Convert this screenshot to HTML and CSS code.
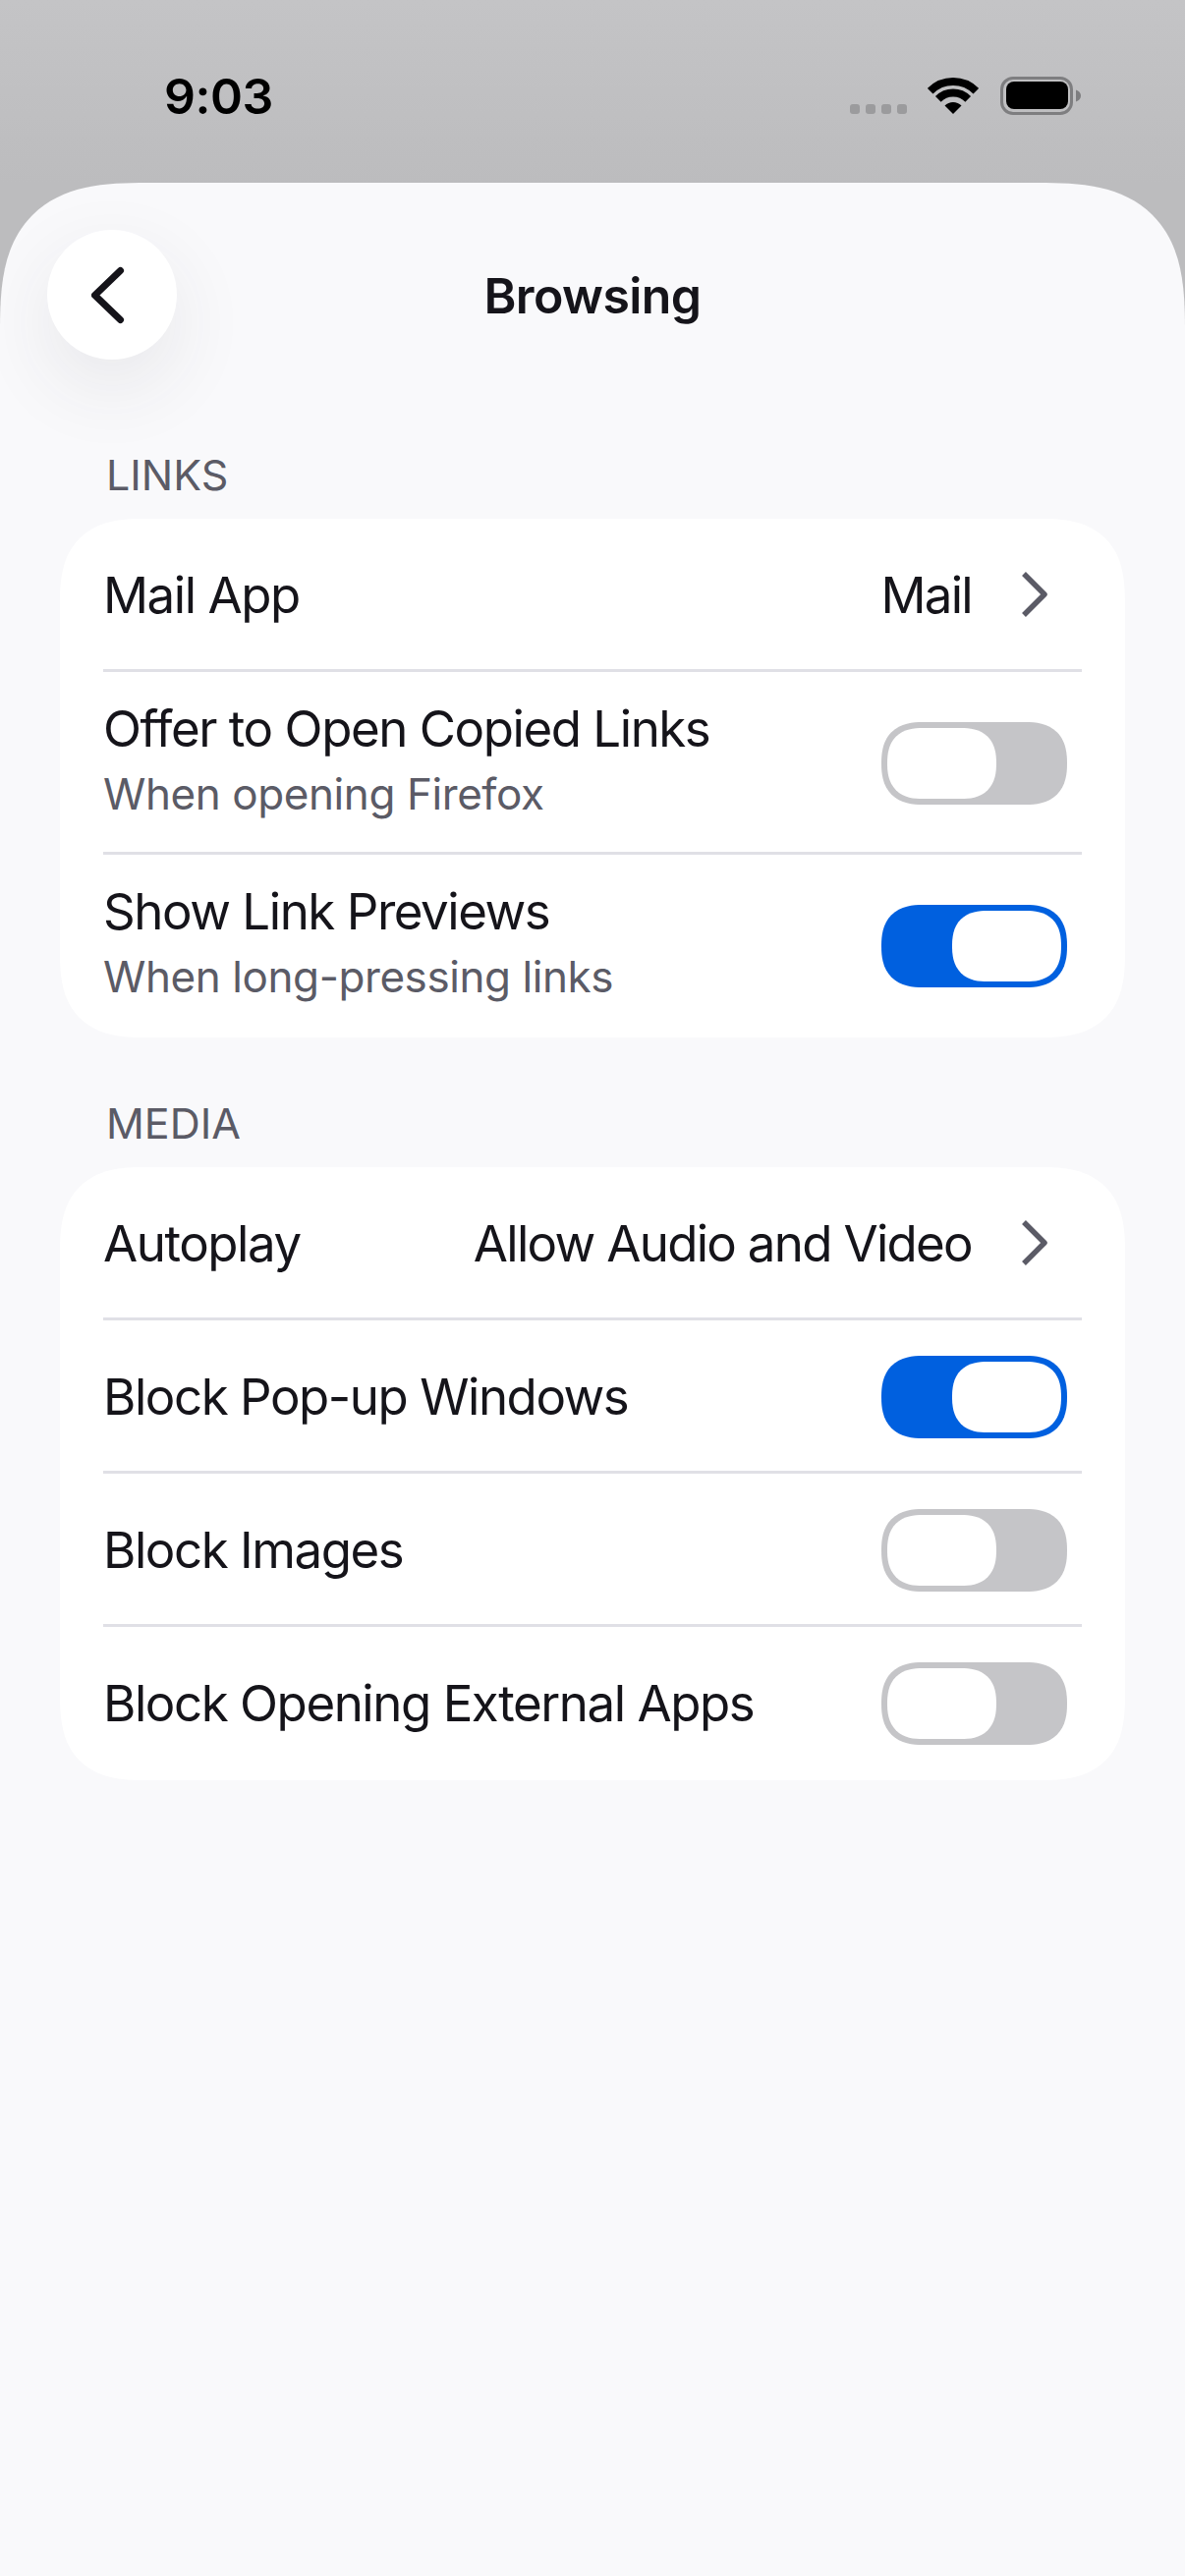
FILE: index.html
```html
<!DOCTYPE html>
<html lang="en">
<head>
<meta charset="utf-8">
<title>Browsing</title>
<link rel="stylesheet" href="styles.css">
</head>
<body>
<div class="phone">
  <header class="status">
    <span class="time">9:03</span>
    <div class="status-icons">
      <div class="dots"><i></i><i></i><i></i><i></i></div>
      <svg class="wifi" width="52" height="37" viewBox="0 0 52 37">
        <path class="wifi-arc" d="M2.67 13.67A33 33 0 0 1 49.33 13.67"/>
        <path class="wifi-arc" d="M10.8 21.8A21.5 21.5 0 0 1 41.2 21.8"/>
        <path class="wifi-fill" d="M26 37L17.5 28.5A12 12 0 0 1 34.5 28.5Z"/>
      </svg>
      <svg class="battery" width="82" height="39" viewBox="0 0 82 39">
        <rect class="batt-shell" x="1.5" y="1.5" width="71" height="36" rx="11.5"/>
        <rect class="batt-fill" x="6" y="5" width="63" height="28" rx="8"/>
        <path class="batt-nub" d="M77 13.5C80 14.5 82 16.5 82 19.5C82 22.5 80 24.5 77 25.5Z"/>
      </svg>
    </div>
  </header>
  <main class="sheet">
    <div class="nav">
      <button class="back" aria-label="Back">
        <svg width="42" height="66" viewBox="0 0 42 66"><path d="M29.500 8.500L3.500 33.500L29.500 58.500"/></svg>
      </button>
      <h1 class="title">Browsing</h1>
    </div>

    <h2 class="section-label section-label-first">LINKS</h2>
    <section class="card">
      <div class="row">
        <span class="label">Mail App</span>
        <span class="value">Mail</span>
        <svg class="chev" width="30" height="48" viewBox="0 0 30 48"><path d="M4 3L25 24L4 45"/></svg>
      </div>
      <div class="row row-tall">
        <div class="stack"><span class="label">Offer to Open Copied Links</span><span class="sub">When opening Firefox</span></div>
        <div class="toggle"><span class="knob"></span></div>
      </div>
      <div class="row row-tall">
        <div class="stack"><span class="label">Show Link Previews</span><span class="sub">When long-pressing links</span></div>
        <div class="toggle on"><span class="knob"></span></div>
      </div>
    </section>

    <h2 class="section-label">MEDIA</h2>
    <section class="card">
      <div class="row">
        <span class="label">Autoplay</span>
        <span class="value">Allow Audio and Video</span>
        <svg class="chev" width="30" height="48" viewBox="0 0 30 48"><path d="M4 3L25 24L4 45"/></svg>
      </div>
      <div class="row">
        <span class="label">Block Pop-up Windows</span>
        <div class="toggle on"><span class="knob"></span></div>
      </div>
      <div class="row">
        <span class="label">Block Images</span>
        <div class="toggle"><span class="knob"></span></div>
      </div>
      <div class="row">
        <span class="label">Block Opening External Apps</span>
        <div class="toggle"><span class="knob"></span></div>
      </div>
    </section>
  </main>
</div>
</body>
</html>
```
FILE: styles.css
```css
* { box-sizing: border-box; }
html, body { margin: 0; padding: 0; }
body { font-family: Inter, "Liberation Sans", sans-serif; color: #15141a; }
.phone { width: 1206px; height: 2622px; overflow: hidden; display: flex; flex-direction: column; background: linear-gradient(#c4c4c6, #bcbcbe 186px); }

.status { height: 186px; flex: none; display: flex; justify-content: space-between; padding: 69px 106px 0 167px; }
.time { font-size: 50px; line-height: 58px; font-weight: 600; color: #000; letter-spacing: -0.5px; }
.status-icons { display: flex; align-items: flex-start; height: 39px; margin-top: 9px; }
.dots { display: flex; gap: 6px; margin-top: 28px; }
.dots i { width: 10px; height: 10px; border-radius: 3px; background: #9b9b9d; }
.wifi { margin: 1px 0 0 21px; }
.wifi-arc { fill: none; stroke: #000; stroke-width: 8; }
.wifi-fill { fill: #000; }
.battery { margin-left: 22px; }
.batt-shell { fill: none; stroke: #7e7e80; stroke-width: 3; }
.batt-fill { fill: #000; }
.batt-nub { fill: #7e7e80; }

.sheet { flex: 1; overflow: hidden; background: #f9f9fb; border-radius: 150px 150px 0 0; corner-shape: superellipse(1.48); padding: 0 61px; }
.nav { height: 271px; position: relative; display: flex; justify-content: center; padding-top: 85px; }
.back { position: absolute; left: -13px; top: 48px; width: 132px; height: 132px; border: 0; padding: 0; border-radius: 50%; background: #fff; box-shadow: 0 28px 80px rgba(58, 57, 68, 0.09); display: flex; align-items: center; justify-content: center; }
.back path { fill: none; stroke: #15141a; stroke-width: 7; stroke-linecap: round; stroke-linejoin: round; }
.title { margin: 0; font-size: 50px; line-height: 60px; font-weight: 600; letter-spacing: -0.6px; }

.section-label { margin: 61px 0 0; padding-left: 47px; height: 53px; font-size: 43px; line-height: 52px; font-weight: 400; color: #5b5b66; }
.section-label-first { margin-top: 0; }
.card { margin: 0; background: #fff; border-radius: 85px; corner-shape: superellipse(1.37); padding: 0 44px; }
.section-label + .card { margin-top: 18px; }
.row { display: flex; align-items: center; justify-content: space-between; height: 156px; padding-top: 3px; border-bottom: 3px solid #e0e0e6; }
.row:last-child { border-bottom: 0; padding-top: 0; }
.row-tall { height: 186px; }
.label { font-size: 51px; line-height: 62px; font-weight: 380; color: #15141a; letter-spacing: -1.45px; }
.value { font-size: 51px; line-height: 62px; font-weight: 380; margin-left: auto; letter-spacing: -1.7px; }
.chev { margin: -3px 33px 0 49px; }
.chev path { fill: none; stroke: #5b5b66; stroke-width: 5.500; stroke-linejoin: round; }
.stack { display: flex; flex-direction: column; margin-bottom: 7px; }
.sub { font-size: 44px; line-height: 56px; font-weight: 380; color: #5b5b66; margin-top: 7px; letter-spacing: -0.42px; }
.toggle { width: 189px; height: 84px; flex: none; margin-right: 15px; border-radius: 42px; corner-shape: superellipse(1.3); background: #c5c5c8; padding: 6px; display: flex; }
.toggle.on { background: #0060df; justify-content: flex-end; }
.knob { width: 111px; height: 72px; border-radius: 36px; corner-shape: superellipse(1.3); background: #fff; }
```
